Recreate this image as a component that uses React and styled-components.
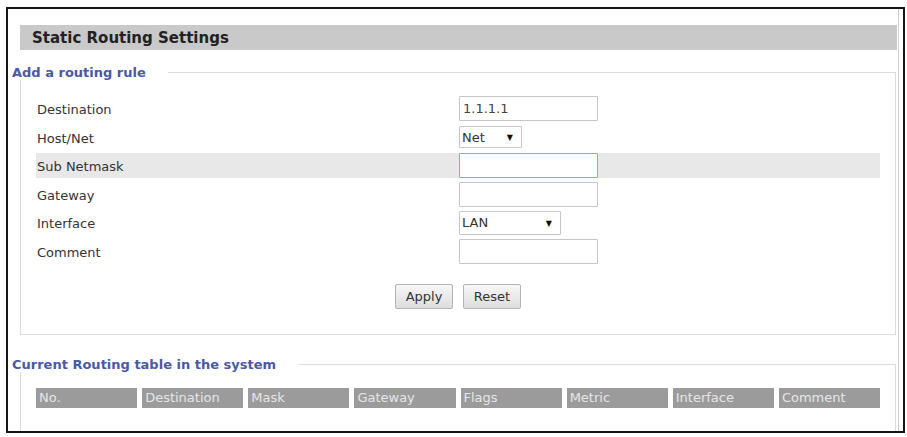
import React from 'react'
import styled, { createGlobalStyle } from 'styled-components'

const GlobalStyle = createGlobalStyle`
  html, body {
    margin: 0;
    background: #fff;
  }
  body {
    font-family: "DejaVu Sans", Verdana, sans-serif;
  }
`

const Frame = styled.div`
  box-sizing: border-box;
  width: 899px;
  height: 426px;
  margin: 7px 0 0 6px;
  padding: 16px 0 0 12px;
  border: 2px solid #151515;
  box-shadow: inset -4px 0 0 #fff, inset -5px 0 0 #d2d2d2;
  overflow: hidden;
`

const TitleBar = styled.div`
  box-sizing: border-box;
  width: 877px;
  height: 25px;
  padding-left: 12px;
  display: flex;
  align-items: center;
  background: #c9c9c9;
  color: #222;
  font-size: 15px;
  font-weight: bold;
`

const Group = styled.fieldset`
  box-sizing: border-box;
  width: 876px;
  min-width: 0;
  margin: ${p => p.$top}px 0 0 0;
  padding: 16px 15px ${p => p.$bottom}px;
  border: 1px solid #dcdcdc;
`

const Legend = styled.legend`
  margin-left: -24px;
  padding: 0 ${p => p.$gap}px 0 0;
  color: #4b58a6;
  font-size: 13px;
  font-weight: bold;
  line-height: 15px;
`

const Rows = styled.div`
  display: flex;
  flex-direction: column;
  gap: 3.6px;
`

const Row = styled.div`
  display: grid;
  grid-template-columns: 423px 1fr;
  align-items: center;
  height: 25px;
  background: ${p => (p.$shade ? '#e8e8e8' : 'transparent')};
`

const Label = styled.span`
  padding: 2px 0 0 1px;
  color: #333;
  font-size: 13px;
`

const TextInput = styled.input`
  box-sizing: border-box;
  width: 139px;
  height: 25px;
  padding: 0 3px;
  border: 1px solid ${p => (p.$focus ? '#8aa8d6' : '#c6c6c6')};
  border-radius: 1px;
  background: #fff;
  color: #444;
  font-family: "DejaVu Sans", Verdana, sans-serif;
  font-size: 13px;
  outline: none;
`

const SelectWrap = styled.div`
  position: relative;
  width: ${p => p.$w}px;
  height: ${p => p.$h}px;
`

const Select = styled.select`
  box-sizing: border-box;
  width: 100%;
  height: 100%;
  padding: 0 2px;
  appearance: none;
  border: 1px solid #c6c6c6;
  border-radius: 1px;
  background: #fff;
  color: #333;
  font-family: "DejaVu Sans", Verdana, sans-serif;
  font-size: 13px;
  outline: none;
`

const Arrow = styled.span`
  position: absolute;
  right: 9px;
  top: 50%;
  transform: translateY(-50%);
  color: #111;
  font-size: 8px;
  pointer-events: none;
`

const Actions = styled.div`
  display: flex;
  justify-content: center;
  gap: 10px;
  margin-top: 20px;
`

const Button = styled.button`
  box-sizing: border-box;
  width: 58px;
  height: 25px;
  padding: 0;
  border: 1px solid #b4b4b4;
  border-radius: 2px;
  background: linear-gradient(#f7f7f7, #dddddd);
  color: #333;
  font-family: "DejaVu Sans", Verdana, sans-serif;
  font-size: 13px;
`

const HeadRow = styled.div`
  display: grid;
  grid-template-columns: repeat(8, 1fr);
  gap: 5px;
`

const HeadCell = styled.div`
  height: 20px;
  padding-left: 3px;
  background: #9b9b9b;
  color: #e6e6e6;
  font-size: 13px;
  line-height: 20px;
  white-space: nowrap;
  overflow: hidden;
`

const Dropdown = ({ value, w, h }) => (
  <SelectWrap $w={w} $h={h}>
    <Select defaultValue={value}>
      <option>{value}</option>
    </Select>
    <Arrow>▼</Arrow>
  </SelectWrap>
)

const columns = ['No.', 'Destination', 'Mask', 'Gateway', 'Flags', 'Metric', 'Interface', 'Comment']

export default function App() {
  return (
    <>
      <GlobalStyle />
      <Frame>
        <TitleBar>Static Routing Settings</TitleBar>

        <Group $top={15} $bottom={25}>
          <Legend $gap={22}>Add a routing rule</Legend>
          <Rows>
            <Row>
              <Label>Destination</Label>
              <TextInput defaultValue="1.1.1.1" />
            </Row>
            <Row>
              <Label>Host/Net</Label>
              <Dropdown value="Net" w={63} h={22} />
            </Row>
            <Row $shade>
              <Label>Sub Netmask</Label>
              <TextInput $focus />
            </Row>
            <Row>
              <Label>Gateway</Label>
              <TextInput />
            </Row>
            <Row>
              <Label>Interface</Label>
              <Dropdown value="LAN" w={102} h={24} />
            </Row>
            <Row>
              <Label>Comment</Label>
              <TextInput />
            </Row>
          </Rows>
          <Actions>
            <Button>Apply</Button>
            <Button>Reset</Button>
          </Actions>
        </Group>

        <Group $top={22} $bottom={60}>
          <Legend $gap={23}>Current Routing table in the system</Legend>
          <HeadRow>
            {columns.map(c => <HeadCell key={c}>{c}</HeadCell>)}
          </HeadRow>
        </Group>
      </Frame>
    </>
  )
}
